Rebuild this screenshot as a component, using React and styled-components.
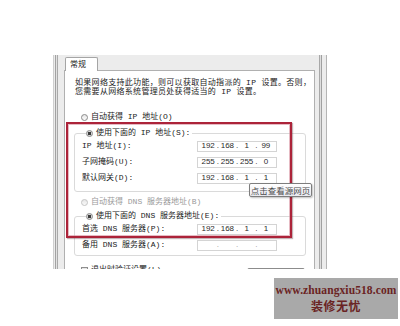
import React from "react"
import styled, { createGlobalStyle } from "styled-components"

const GlobalStyle = createGlobalStyle`
  html, body {
    margin: 0;
    padding: 0;
    background: #ffffff;
  }
  body {
    width: 400px;
    height: 326px;
    overflow: hidden;
  }
`

const uiFont = `"Liberation Mono", "Noto Sans CJK SC", monospace`

const Page = styled.div`
  position: relative;
  width: 400px;
  height: 326px;
  padding: 55px 0 0 53px;
  box-sizing: border-box;
  overflow: hidden;
  font-family: ${uiFont};
  font-size: 8px;
  line-height: 10px;
  color: #222;
`

const Dialog = styled.div`
  width: 274px;
  height: 214px;
  box-sizing: border-box;
  padding: 2px 11px 0 10px;
  background: #ececec;
  border-left: 1px solid #cfcfcf;
  border-right: 1px solid #b4b4b4;
  box-shadow: inset 1px 0 0 #ececec, inset 2px 0 0 #a2a2a2, inset 3px 0 0 #e2e2e2,
    inset 4px 0 0 #a9a9a9, inset -4px 0 0 #ececec, inset -5px 0 0 #a0a0a0,
    inset -6px 0 0 #dedede, inset -7px 0 0 #a8a8a8;
  overflow: hidden;
  display: flex;
  flex-direction: column;
`

const TabStrip = styled.div`
  display: flex;
  padding-left: 1px;
  height: 13px;
  position: relative;
  z-index: 1;
`

const Tab = styled.div`
  width: 33px;
  height: 14px;
  box-sizing: border-box;
  padding: 2px 0 0 4px;
  background: #ffffff;
  border: 1px solid #a5a5a5;
  border-bottom: none;
  border-radius: 2px 2px 0 0;
  font-size: 8px;
`

const Panel = styled.div`
  flex: 1;
  background: #ffffff;
  border: 1px solid #b0b0b0;
  padding: 7px 8px 0 9px;
  display: flex;
  flex-direction: column;
`

const Intro = styled.p`
  margin: 0 0 16px 1px;
  line-height: 9px;
  letter-spacing: 0.3px;
  white-space: nowrap;
`

const OptionRow = styled.div`
  display: flex;
  align-items: center;
  gap: 3px;
  height: 10px;
  padding-left: 7px;
  margin-bottom: ${p => p.$after || 0}px;
  color: ${p => (p.$disabled ? "#9a9a9a" : "#222")};
`

const Radio = styled.span`
  width: 7px;
  height: 7px;
  box-sizing: border-box;
  border-radius: 50%;
  border: 1px solid ${p => (p.$disabled ? "#c4c4c4" : "#8a8a8a")};
  background: ${p =>
    p.$checked
      ? "radial-gradient(circle, #3b3b3b 0 1.6px, #d8d8d8 2px)"
      : "linear-gradient(#e6e6e6, #fafafa)"};
  flex: none;
`

const Check = styled.span`
  width: 7px;
  height: 7px;
  box-sizing: border-box;
  border: 1px solid #8e8e8e;
  background: linear-gradient(#e4e4e4, #fbfbfb);
  flex: none;
`

const Group = styled.fieldset`
  margin: 0 0 ${p => p.$after || 0}px 0;
  padding: 0 0 ${p => p.$bottom || 0}px 7px;
  border: 1px solid #dadada;
  border-radius: 3px;
  min-width: 0;
`

const Legend = styled.legend`
  display: flex;
  align-items: center;
  gap: 3px;
  height: 10px;
  padding: 0 2px 0 0;
  margin-left: 4px;
  background: #ffffff;
`

const FieldRow = styled.div`
  display: grid;
  grid-template-columns: 115px 80px;
  align-items: center;
  height: 16px;
`

const IpBox = styled.div`
  height: 11px;
  box-sizing: border-box;
  border: 1px solid #d4d4d4;
  display: flex;
  align-items: center;
  padding: 0 2px;
  font-family: "Liberation Sans", Arial, sans-serif;
  font-size: 8px;
  color: #2a2a2a;
`

const Seg = styled.span`
  flex: 1;
  text-align: center;
`

const Dot = styled.span`
  width: 3px;
  text-align: center;
  color: ${p => (p.$faint ? "#9a9a9a" : "#2a2a2a")};
`

const BottomRow = styled.div`
  display: flex;
  justify-content: space-between;
  align-items: flex-start;
  margin-top: 8px;
  padding-left: 7px;
`

const CheckLabel = styled.div`
  display: flex;
  align-items: center;
  gap: 3px;
  height: 10px;
  margin-top: 1px;
`

const Button = styled.div`
  width: 58px;
  height: 15px;
  box-sizing: border-box;
  margin-top: 4px;
  margin-right: 1px;
  border: 1px solid #8c8c8c;
  border-radius: 2px;
  background: linear-gradient(#f6f6f6, #dcdcdc);
  text-align: center;
  line-height: 13px;
`

const Highlight = styled.div`
  position: absolute;
  left: 66px;
  top: 122px;
  width: 226px;
  height: 116px;
  box-sizing: border-box;
  border: 2px solid #ac2339;
  box-shadow: inset 0 0 0 1px rgba(214, 140, 155, 0.6), 1px 1px 1px rgba(90, 40, 50, 0.35);
  pointer-events: none;
`

const Tooltip = styled.div`
  position: absolute;
  left: 249px;
  top: 183px;
  width: 63px;
  height: 14px;
  box-sizing: border-box;
  border: 1px solid #7d7d7d;
  border-radius: 2px;
  background: linear-gradient(#ffffff, #e9e9ef);
  box-shadow: 1px 1px 2px rgba(0, 0, 0, 0.25);
  font-family: "Noto Sans CJK SC", sans-serif;
  font-size: 8.5px;
  line-height: 12px;
  text-align: center;
  color: #4a4a4a;
`

const Watermark = styled.div`
  position: absolute;
  left: 274px;
  top: 278px;
  width: 124px;
  height: 41px;
  background: #a9a9a9;
  display: flex;
  flex-direction: column;
  align-items: center;
  justify-content: center;
  color: #6a2323;
  font-weight: 700;
`

const Site = styled.div`
  font-family: "Liberation Serif", "Times New Roman", serif;
  font-size: 11.5px;
  line-height: 15px;
  letter-spacing: 0.1px;
`

const Brand = styled.div`
  font-family: "Noto Sans CJK SC", sans-serif;
  font-size: 12px;
  line-height: 16px;
  letter-spacing: 0.5px;
`

const IpField = ({ value, faint }) => {
  const parts = value ? value.split(".") : ["", "", "", ""]
  return (
    <IpBox>
      <Seg>{parts[0]}</Seg>
      <Dot $faint={faint}>.</Dot>
      <Seg>{parts[1]}</Seg>
      <Dot $faint={faint}>.</Dot>
      <Seg>{parts[2]}</Seg>
      <Dot $faint={faint}>.</Dot>
      <Seg>{parts[3]}</Seg>
    </IpBox>
  )
}

export default function App() {
  return (
    <>
      <GlobalStyle />
      <Page>
        <Dialog>
          <TabStrip>
            <Tab>常规</Tab>
          </TabStrip>
          <Panel>
            <Intro>
              如果网络支持此功能，则可以获取自动指派的 IP 设置。否则，
              <br />
              您需要从网络系统管理员处获得适当的 IP 设置。
            </Intro>

            <OptionRow $after={6}>
              <Radio />
              自动获得 IP 地址(O)
            </OptionRow>

            <Group $after={5} $bottom={5}>
              <Legend>
                <Radio $checked />
                使用下面的 IP 地址(S):
              </Legend>
              <FieldRow>
                <span>IP 地址(I):</span>
                <IpField value="192.168.1.99" />
              </FieldRow>
              <FieldRow>
                <span>子网掩码(U):</span>
                <IpField value="255.255.255.0" />
              </FieldRow>
              <FieldRow>
                <span>默认网关(D):</span>
                <IpField value="192.168.1.1" />
              </FieldRow>
            </Group>

            <OptionRow $disabled $after={4}>
              <Radio $disabled />
              自动获得 DNS 服务器地址(B)
            </OptionRow>

            <Group $bottom={2}>
              <Legend>
                <Radio $checked />
                使用下面的 DNS 服务器地址(E):
              </Legend>
              <FieldRow>
                <span>首选 DNS 服务器(P):</span>
                <IpField value="192.168.1.1" />
              </FieldRow>
              <FieldRow>
                <span>备用 DNS 服务器(A):</span>
                <IpField faint />
              </FieldRow>
            </Group>

            <BottomRow>
              <CheckLabel>
                <Check />
                退出时验证设置(L)
              </CheckLabel>
              <Button>高级(V)...</Button>
            </BottomRow>
          </Panel>
        </Dialog>

        <Highlight />
        <Tooltip>点击查看源网页</Tooltip>
        <Watermark>
          <Site>www.zhuangxiu518.com</Site>
          <Brand>装修无忧</Brand>
        </Watermark>
      </Page>
    </>
  )
}
